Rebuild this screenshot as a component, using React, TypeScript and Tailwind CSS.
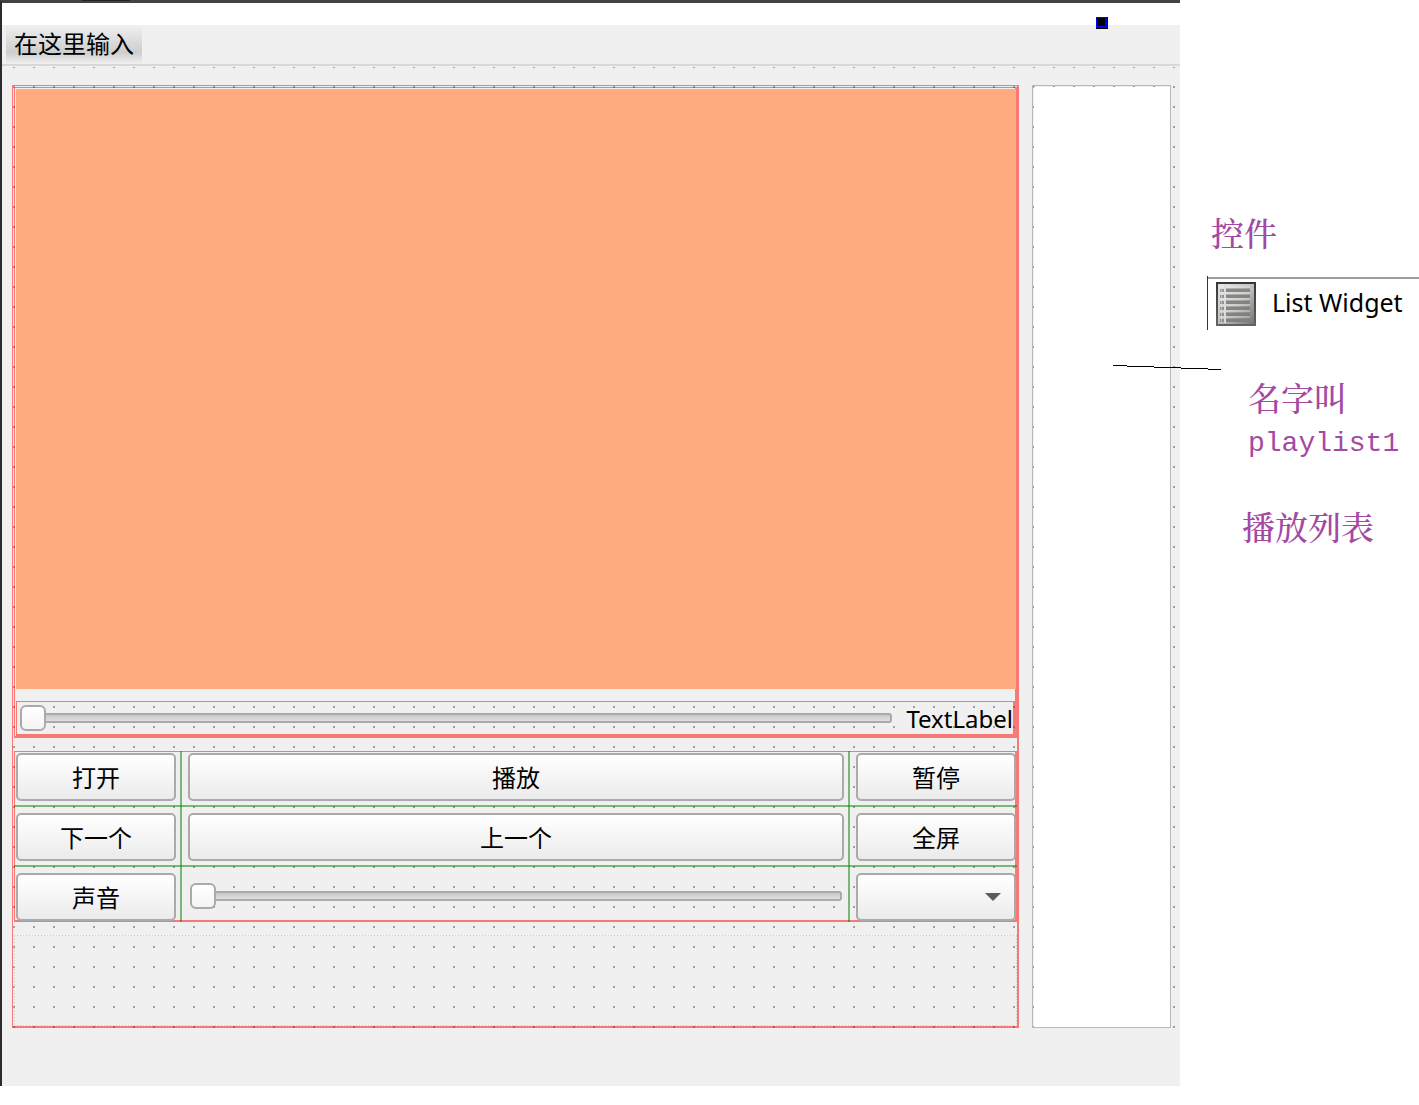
import React from "react";

const UI_FONT = "font-['Noto_Sans','Noto_Sans_CJK_SC',sans-serif]";
const NOTE_FONT = "font-['Noto_Serif_CJK_SC','Noto_Sans_CJK_SC',serif] font-medium";
const FRAME = "border-t border-l border-r-2 border-b-2 border-[#ff000080]";
const BUTTON =
  "h-12 w-full rounded-[5px] border-2 border-[#aaaaaa] bg-linear-to-b from-white to-[#ebebeb] pt-[2px] text-2xl leading-none text-black";

function PushButton({ children }: { children: React.ReactNode }) {
  return (
    <button type="button" className={BUTTON}>
      {children}
    </button>
  );
}

function Slider({ label }: { label: string }) {
  return (
    <input
      type="range"
      aria-label={label}
      min={0}
      max={100}
      defaultValue={0}
      className="block h-[26px] min-w-0 flex-1 appearance-none bg-transparent [&::-webkit-slider-runnable-track]:h-[10px] [&::-webkit-slider-runnable-track]:rounded-[3px] [&::-webkit-slider-runnable-track]:border-2 [&::-webkit-slider-runnable-track]:border-[#aaaaaa] [&::-webkit-slider-runnable-track]:bg-linear-to-b [&::-webkit-slider-runnable-track]:from-[#c8c8c8] [&::-webkit-slider-runnable-track]:to-[#e0e0e0] [&::-webkit-slider-thumb]:-mt-[10px] [&::-webkit-slider-thumb]:-ml-[2px] [&::-webkit-slider-thumb]:size-[26px] [&::-webkit-slider-thumb]:appearance-none [&::-webkit-slider-thumb]:rounded-[6px] [&::-webkit-slider-thumb]:border-2 [&::-webkit-slider-thumb]:border-[#aaaaaa] [&::-webkit-slider-thumb]:bg-linear-to-b [&::-webkit-slider-thumb]:from-white [&::-webkit-slider-thumb]:to-[#f4f4f4]"
    />
  );
}

function ListIcon() {
  const rows = [4, 10, 16, 22, 28, 34];
  return (
    <svg width="40" height="44" viewBox="0 0 40 44" aria-hidden="true">
      <defs>
        <linearGradient id="page" x1="0" y1="0" x2="1" y2="1">
          <stop offset="0" stopColor="#e8e8e8" />
          <stop offset="0.5" stopColor="#c0c2be" />
          <stop offset="1" stopColor="#70726e" />
        </linearGradient>
        <linearGradient id="edge" x1="0" y1="0" x2="0" y2="1">
          <stop offset="0" stopColor="#363838" />
          <stop offset="1" stopColor="#626462" />
        </linearGradient>
      </defs>
      <rect x="1" y="1" width="38" height="42" fill="url(#page)" stroke="url(#edge)" strokeWidth="2" />
      {rows.map((y) => (
        <g key={y}>
          <rect x="4" y={y} width="30" height="2" fill="#ffffff" fillOpacity="0.25" />
          <rect x="4" y={y + 3} width="4" height="3" fill="#7c7e7c" fillOpacity="0.75" />
          <rect x="10" y={y + 3} width="24" height="3" fill="#7c7e7c" fillOpacity="0.9" />
          <rect x="10" y={y + 2} width="24" height="1" fill="#7c7e7c" fillOpacity="0.4" />
        </g>
      ))}
      <rect x="8" y="3" width="2" height="38" fill="#dcdcdc" />
      <rect x="5" y="3" width="1" height="38" fill="#dcdcdc" fillOpacity="0.6" />
    </svg>
  );
}

function VideoColumn() {
  return (
    <div className={`flex min-w-0 flex-1 flex-col ${FRAME} pt-px pl-px`}>
      <div className={`flex flex-col ${FRAME} pt-px pl-px`}>
        <div className="-mr-px h-[600px] bg-[#ffaa7f]" />
        <div className={`mt-3 flex h-[35px] items-center ${FRAME}`}>
          <div className="ml-[3px] flex min-w-0 flex-1">
            <Slider label="TextLabel" />
          </div>
          <span className="ml-[14px] pt-[2px] text-2xl leading-8">TextLabel</span>
        </div>
      </div>

      <div className={`relative mt-[13px] ${FRAME}`}>
        <div className="-mr-px -mb-px grid grid-cols-[160px_minmax(0,1fr)_160px] gap-3 pt-px pl-px">
          <PushButton>打开</PushButton>
          <PushButton>播放</PushButton>
          <PushButton>暂停</PushButton>
          <PushButton>下一个</PushButton>
          <PushButton>上一个</PushButton>
          <PushButton>全屏</PushButton>
          <PushButton>声音</PushButton>
          <div className="flex h-[46px] items-center px-[2px]">
            <Slider label="声音" />
          </div>
          <div className="relative">
            <select aria-label="选项" className={`${BUTTON} appearance-none`} />
            <svg className="pointer-events-none absolute top-5 right-[15px]" width="16" height="8" aria-hidden="true">
              <path d="M0 0H16L8 8Z" fill="#5c5c5c" />
            </svg>
          </div>
        </div>
        <div className="pointer-events-none absolute top-[53px] -right-[2px] -left-px h-[2px] bg-[#00800080]" />
        <div className="pointer-events-none absolute top-[113px] -right-[2px] -left-px h-[2px] bg-[#00800080]" />
        <div className="pointer-events-none absolute -top-px -bottom-[2px] left-[165px] w-[2px] bg-[#00800080]" />
        <div className="pointer-events-none absolute -top-px right-[165px] -bottom-[2px] w-[2px] bg-[#00800080]" />
      </div>

      <div className="mt-[13px] flex h-[91px] flex-col">
        <div className="h-px bg-[repeating-linear-gradient(to_right,#cccccc_0_1px,transparent_1px_3px)]" />
        <div className="flex flex-1 justify-between">
          <div className="w-px bg-[repeating-linear-gradient(to_bottom,#cccccc_0_1px,transparent_1px_3px)]" />
          <div className="w-px bg-[repeating-linear-gradient(to_bottom,#cccccc_0_1px,transparent_1px_3px)]" />
        </div>
        <div className="h-px bg-[repeating-linear-gradient(to_right,#cccccc_0_1px,transparent_1px_3px)]" />
      </div>
    </div>
  );
}

function DesignerWindow() {
  return (
    <div className="relative min-w-0 flex-1 border-t-[3px] border-l-2 border-t-[#444244] border-l-[#2b2b2d] pt-[22px]">
      <div className="absolute -top-[3px] left-20 h-px w-12 bg-[#242224]" />
      <div className="bg-[#f0f0f0] pb-[58px]">
        <nav className="flex h-[42px] flex-col">
          <div className="flex h-[39px] pl-1">
            <button
              type="button"
              className="bg-linear-to-b from-[#f0f0f0] via-[#cecece] via-70% to-[#f0f0f0] px-2 pb-[2px] text-2xl leading-none"
            >
              在这里输入
            </button>
          </div>
          <div className="h-[2px] bg-[#d8d8d8]" />
        </nav>
        <main className="flex gap-[13px] bg-[conic-gradient(from_270deg_at_2px_2px,#a0a0a0_90deg,transparent_0)] bg-[size:20px_20px] bg-[position:11px_-1px] pt-[18px] pr-[9px] pl-[10px]">
          <VideoColumn />
          <div className="flex w-[139px] border border-[#b8b8b8] pt-px pl-px">
            <ul aria-label="playlist1" className="flex-1 bg-white" />
          </div>
        </main>
      </div>
      <div className="absolute top-[14px] right-[72px] size-3 border-r border-b border-black bg-[#0000ff] pt-px pl-px">
        <div className="size-2 bg-black" />
      </div>
    </div>
  );
}

function Notes() {
  return (
    <aside className="relative w-[239px] shrink-0 pt-[208px] text-[#a349a4]">
      <p className={`pl-[31px] text-[33px] leading-[48px] ${NOTE_FONT}`}>控件</p>
      <div className="mt-5 ml-[27px] flex h-[54px] border-l border-[#333333] text-black">
        <div className="mt-px flex flex-1 items-start gap-4 border-t-2 border-[#9c9c9c] pt-[3px] pl-2">
          <ListIcon />
          <span className="mt-1 text-[25px] leading-8 whitespace-nowrap">List Widget</span>
        </div>
      </div>
      <div className="mt-[47px] pl-[68px]">
        <p className={`text-[33px] leading-[40px] ${NOTE_FONT}`}>名字叫</p>
        <p className="mt-[5px] font-['Liberation_Mono',monospace] text-[28px] leading-[44px]">playlist1</p>
      </div>
      <p className={`mt-9 pl-[62px] text-[33px] leading-[48px] ${NOTE_FONT}`}>播放列表</p>
      <svg className="absolute top-[364px] -left-[67px]" width="108" height="7" aria-hidden="true">
        <path d="M0 1.5L108 5.5" stroke="#000000" shapeRendering="crispEdges" />
      </svg>
    </aside>
  );
}

export default function App() {
  return (
    <div className={`flex min-h-screen items-start bg-white text-black ${UI_FONT}`}>
      <DesignerWindow />
      <Notes />
    </div>
  );
}
